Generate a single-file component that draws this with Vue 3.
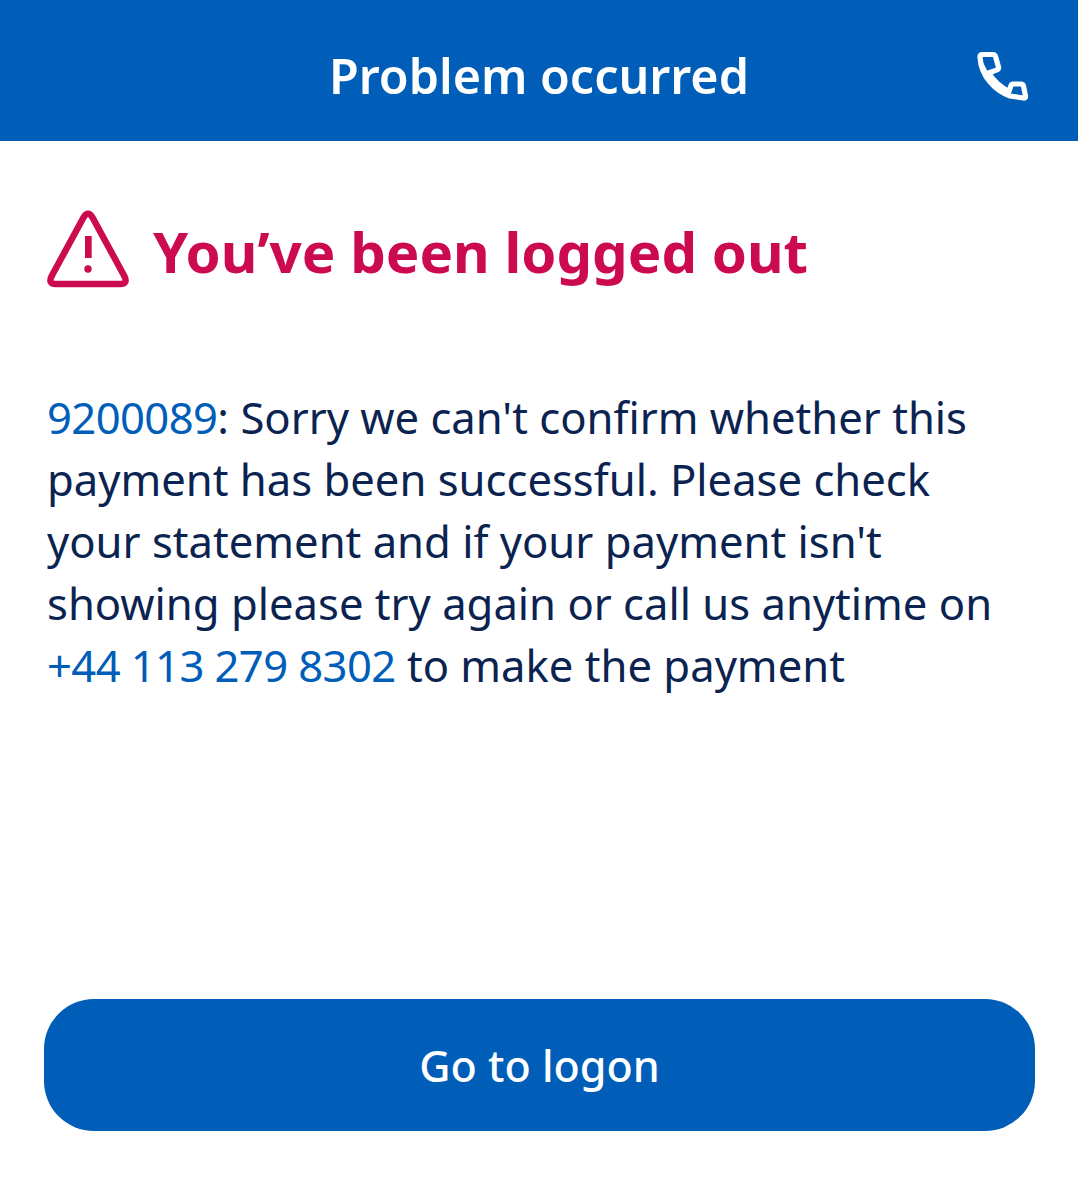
<template>
  <div class="page">
    <header class="top-bar">
      <h1 class="top-title">Problem occurred</h1>
      <svg class="phone-icon" width="90" height="90" viewBox="0 0 90 90" fill="none">
        <path d="M20 27Q20 24.500 22.500 24.500H33Q35 24.500 35.500 26.500L38.500 37Q39 39 37 39.800L28.500 43C33 50 40 57 49 61.500L51 55.500Q51.500 54 53 54H61Q63 54 63.500 56L65.500 66Q66 68.500 63.500 68L50 66C36 61 21 47 20 27Z" stroke="#fff" stroke-width="5.200" stroke-linejoin="round"/>
        <path d="M28.500 43C33 50 40 57 49 61.500L50 66C36 61 21 47 20 27Z" fill="#fff"/>
      </svg>
    </header>

    <main class="content">
      <div class="heading">
        <svg class="warn-icon" width="84" height="80" viewBox="0 0 84 80" fill="none">
          <path d="M37.500 9.500Q42 2 46.500 9.500L77.500 66.500Q83 76 74 76H10Q1 76 6.500 66.500Z" stroke="#cc0a50" stroke-width="6.500" stroke-linejoin="round"/>
          <rect x="39" y="28" width="6.700" height="22" fill="#cc0a50"/>
          <circle cx="42" cy="61" r="3.700" fill="#cc0a50"/>
        </svg>
        <h2 class="heading-text">You’ve been logged out</h2>
      </div>

      <p class="message">
        <a class="link">9200089</a>: Sorry we can't confirm whether this payment has been successful. Please check your statement and if your payment isn't showing please try again or call us anytime on <a class="link">+44 113 279 8302</a> to make the payment
      </p>
    </main>

    <div class="actions">
      <button class="logon-btn">Go to logon</button>
    </div>
  </div>
</template>

<script setup>
</script>

<style>
html,
body {
  margin: 0;
  background: #fff;
}
</style>

<style scoped>
.page {
  height: 1200px;
  display: flex;
  flex-direction: column;
  font-family: "Noto Sans", "Open Sans", sans-serif;
  background: #fff;
}

.top-bar {
  height: 141px;
  box-sizing: border-box;
  padding-top: 8px;
  background: #005eb8;
  display: flex;
  align-items: center;
  justify-content: center;
  position: relative;
}

.top-title {
  margin: 0;
  color: #fff;
  font-size: 48.400px;
  font-weight: 600;
}

.phone-icon {
  position: absolute;
  left: 960px;
  top: 30px;
}

.content {
  flex: 1;
  padding: 65px 70px 0 46px;
}

.heading {
  display: flex;
  align-items: center;
  gap: 23px;
}

.heading-text {
  margin: 0;
  padding-top: 7px;
  color: #cc0a50;
  font-size: 56.400px;
  font-weight: 700;
}

.message {
  margin: 96px 0 0 1px;
  color: #0b2350;
  font-size: 43.600px;
  line-height: 62px;
}

.link {
  color: #005eb8;
  letter-spacing: -0.6px;
}

.actions {
  padding: 0 43px 69px 44px;
}

.logon-btn {
  width: 100%;
  height: 132px;
  border: none;
  border-radius: 50px;
  background: #005eb8;
  color: #fff;
  font-family: inherit;
  font-size: 43px;
  font-weight: 500;
}
</style>
